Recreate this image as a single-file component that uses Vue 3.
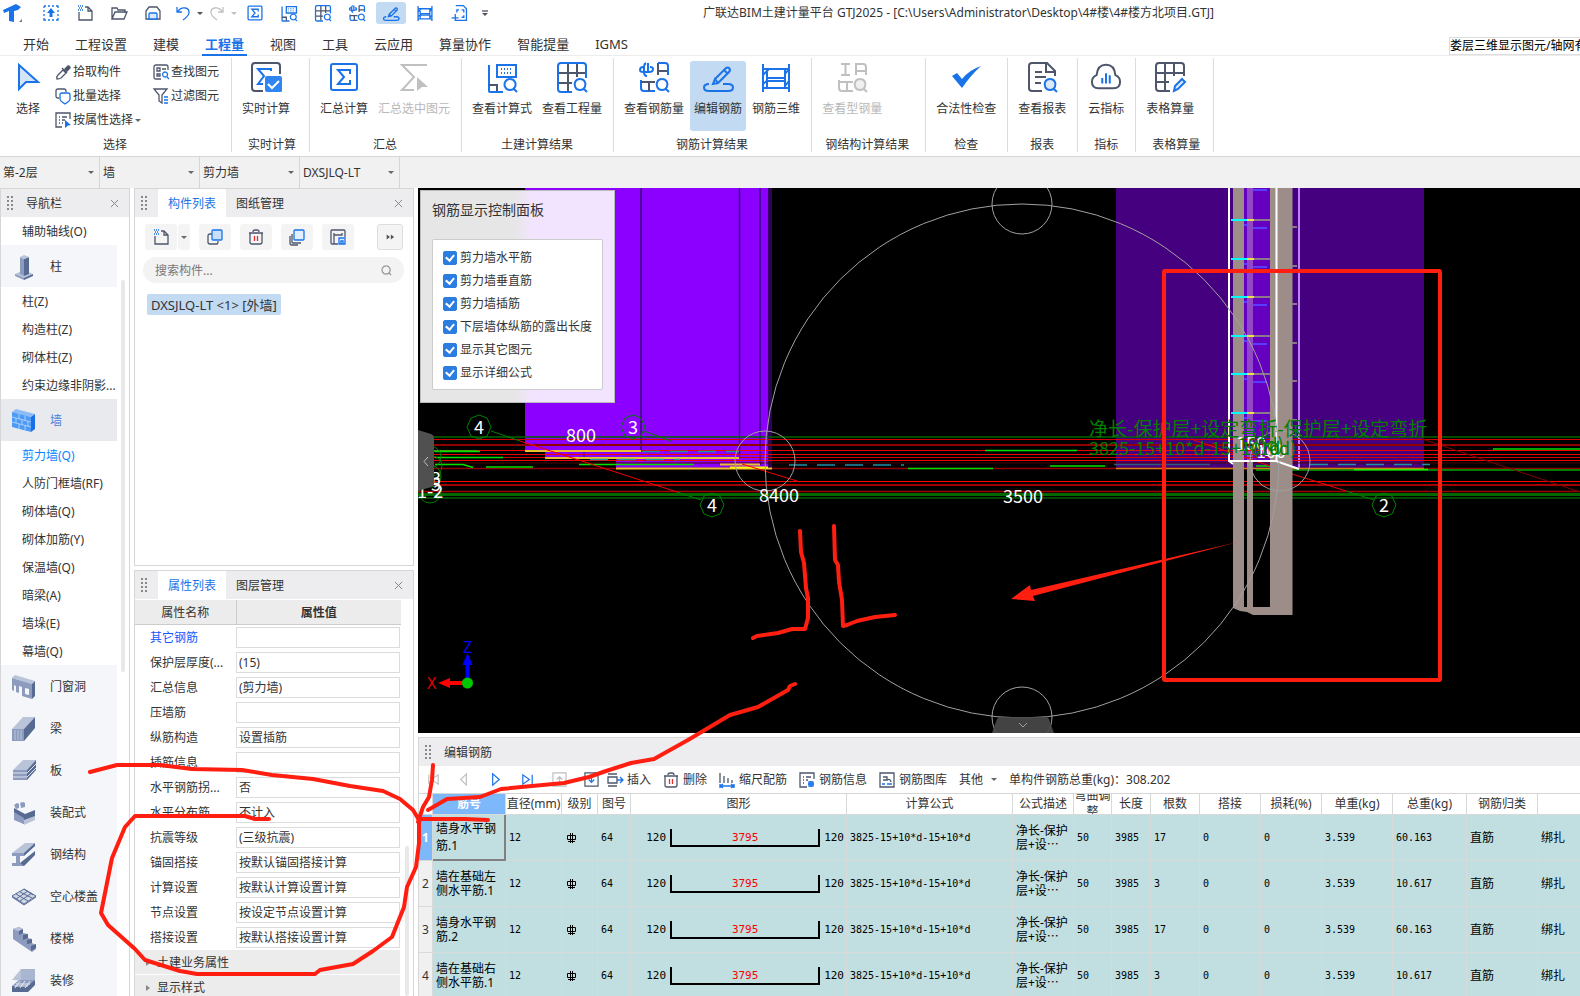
<template>
    <div class="app">
        <header class="titlebar">
            <Icon class="logo" name="logo" :size="24" :w="1" />
            <button v-for="q in quick" :key="q.id" type="button" :class="['qat', q.cls]" :aria-label="q.tip">
                <Icon :name="q.icon" :size="q.size || 16" :w="1.3" />
            </button>
            <h1 class="title">广联达BIM土建计量平台 GTJ2025 - [C:\Users\Administrator\Desktop\4#楼\4#楼方北项目.GTJ]</h1>
        </header>

        <nav class="tabs">
            <button v-for="t in tabs" :key="t" type="button" :class="['tab', { on: t === activeTab }]" @click="activeTab = t">
                <span>{{ t }}</span>
            </button>
            <span class="tip">娄层三维显示图元/轴网有</span>
        </nav>

        <section class="ribbon">
            <div class="group first">
                <div class="actions">
                    <button type="button" class="big"><Icon name="cursor" :size="30" :w="2" /><span>选择</span></button>
                    <div class="smalls">
                        <button v-for="s in smalls" :key="s.text" type="button" class="small">
                            <Icon :name="s.icon" :size="16" :w="1.3" /><span>{{ s.text }}</span><i v-if="s.menu" class="caret"></i>
                        </button>
                    </div>
                </div>
                <div class="gname">选择</div>
            </div>
            <div v-for="g in groups" :key="g.name" :class="['group', g.cls]">
                <div class="actions">
                    <button v-for="b in g.items" :key="b[0]" type="button" :class="['big', b[2]]" :disabled="b[2] === 'off'">
                        <Icon :name="b[1]" :size="30" :w="2" /><span>{{ b[0] }}</span>
                    </button>
                </div>
                <div class="gname">{{ g.name }}</div>
            </div>
        </section>

        <div class="combos">
            <label v-for="c in combos" :key="c" class="combo">
                <select :aria-label="c"><option>{{ c }}</option></select>
                <i class="caret"></i>
            </label>
        </div>

        <main class="work">
            <aside class="panel navpanel">
                <div class="phead"><i class="grip"></i><span class="ptitle">导航栏</span><button type="button" class="close" aria-label="关闭"><Icon name="close" :size="9" :w="1" /></button></div>
                <div class="navlist">
                    <template v-for="n in navs" :key="n.text">
                        <button v-if="n.icon" type="button" :class="['cat', { cur: n.cur }]"><Icon :name="n.icon" :size="26" :w="1" /><span>{{ n.text }}</span></button>
                        <button v-else type="button" :class="['leaf', { blue: n.blue }]">{{ n.text }}</button>
                    </template>
                    <i class="navbar"></i>
                </div>
            </aside>

            <div class="side">
                <section class="panel comp">
                    <div class="phead">
                        <i class="grip"></i>
                        <button type="button" class="ptab on">构件列表</button>
                        <button type="button" class="ptab">图纸管理</button>
                        <button type="button" class="close" aria-label="关闭"><Icon name="close" :size="9" :w="1" /></button>
                    </div>
                    <div class="ctools">
                        <span class="split">
                            <button type="button" class="tool" aria-label="新建"><Icon name="newfile" :size="16" :w="1.3" /></button>
                            <button type="button" class="tool arrow" aria-label="更多"><i class="caret"></i></button>
                        </span>
                        <button type="button" class="tool" aria-label="复制"><Icon name="copy" :size="16" :w="1.3" /></button>
                        <button type="button" class="tool" aria-label="删除"><Icon name="trash" :size="16" :w="1.3" /></button>
                        <button type="button" class="tool" aria-label="层间复制"><Icon name="layers" :size="16" :w="1.3" /></button>
                        <button type="button" class="tool" aria-label="存档"><Icon name="archive" :size="16" :w="1.3" /></button>
                        <button type="button" class="tool more" aria-label="展开"><Icon name="more" :size="10" :w="1" /></button>
                    </div>
                    <label class="search">
                        <input type="text" placeholder="搜索构件..." aria-label="搜索构件">
                        <Icon name="search" :size="11" :w="1.3" />
                    </label>
                    <button type="button" class="node">DXSJLQ-LT &lt;1&gt; [外墙]</button>
                </section>

                <section class="panel props">
                    <div class="phead">
                        <i class="grip"></i>
                        <button type="button" class="ptab on">属性列表</button>
                        <button type="button" class="ptab">图层管理</button>
                        <button type="button" class="close" aria-label="关闭"><Icon name="close" :size="9" :w="1" /></button>
                    </div>
                    <table class="ptable">
                        <thead><tr><th class="pn">属性名称</th><th class="pv">属性值</th></tr></thead>
                        <tbody>
                            <tr v-for="(p, i) in props" :key="p[0]">
                                <td><label :for="'p' + i" :class="{ blue2: i === 0 }">{{ p[0] }}</label></td>
                                <td><input :id="'p' + i" v-model="p[1]" type="text"></td>
                            </tr>
                        </tbody>
                    </table>
                    <button type="button" class="fold"><i class="tri"></i>土建业务属性</button>
                    <button type="button" class="fold"><i class="tri"></i>显示样式</button>
                    <i class="pbar"></i>
                </section>
            </div>

            <div class="right">
                <section class="view">
                    <svg class="scene" viewBox="418 188 1162 545" preserveAspectRatio="xMinYMin slice">
                        <!-- 左侧墙体 -->
                        <path d="M525 188H768V468H616V458H545V451H525Z" fill="#8b00ff" />
                        <path d="M768 188h4V468h-4z" fill="#30005c" />
                        <path d="M641 188V451M739.5 188V458M760 188V465M584 451v6" stroke="#3c0078" stroke-width="1.5" />
                        <!-- 右侧墙体 -->
                        <path d="M1116 188h308V468h-308z" fill="#450080" />
                        <path d="M1244 188h26V461h-26z" fill="#6600c0" />
                        <path d="M1247 188h6V461h-6z" fill="#9048c8" />
                        <path d="M1299 188V468" stroke="#c080ff" stroke-width="2" />
                        <!-- 轴线 -->
                        <path v-for="l in gridLines" :key="l[0]" :d="`M418 ${l[0]}H2400`" :stroke="l[1]" :stroke-width="l[2]" />
                        <path d="M435 451.5h45M435 457.5h68M435 464.5h28l10 3M486 467h47M579 464.5h115M985 450.5h92M908 468.5h85M1050 466h55M1256 466h20M1493 449H2400M418 451h60" stroke="#00e000" stroke-width="1.5" fill="none" />
                        <path d="M1256 470H2400" stroke="#008000" stroke-width="2" />
                        <path d="M1354 469.5h74" stroke="#00ff00" stroke-width="1.5" />
                        <path d="M525 451h116M616 468.5h156M720 464.5h40M545 458h194" stroke="#e8c030" stroke-width="2" />
                        <path d="M730 467.5h38" stroke="#ffff00" stroke-width="2" />
                        <path d="M1116 468.5h308" stroke="#d08010" stroke-width="1.5" />
                        <path d="M642 451.5h97M590 459.5h90M789 465h115M1310 464.5h120" stroke="#2090a8" stroke-width="1.5" stroke-dasharray="18 10" />
                        <path d="M1114 464.5h96" stroke="#305878" stroke-width="1.5" />
                        <path d="M520 441L677 492M742 464l58 18M1191 439l79 27M1292 474l54 17" stroke="#f00000" fill="none" />
                        <path d="M1422 439L1580 492" stroke="#800000" />
                        <path d="M491 431l29 10M677 492l24 8M644 431l27 10M1346 491l28 9" stroke="#008000" fill="none" />
                        <!-- 暗柱 -->
                        <path d="M1233 188h11V607h3V461h6V607h17V188h22.500V615H1253l-6-3-7-1-7-3z" fill="#9d8d88" />
                        <path d="M1229 188V461l4 3M1276.500 188V461M1229 461h47l23 8" stroke="#fff" stroke-width="2" fill="none" />
                        <g v-for="y in ticks" :key="y" stroke-width="2">
                            <path :d="`M1231 ${y}h16`" stroke="#00ffff" />
                            <path :d="`M1247 ${y}h7`" stroke="#f0e040" />
                            <path :d="`M1254 ${y}h16M1292 ${y + 7}h5`" stroke="#8a7a88" />
                            <path :d="`M1253 ${y + 8}h14M1244 ${y + 5}h3`" stroke="#5a3cff" />
                        </g>
                        <path d="M1253 190h14" stroke="#5a3cff" stroke-width="2" />
                        <!-- 动态观察球 -->
                        <g fill="none" stroke="#a0a0a0">
                            <circle cx="1022" cy="461" r="257" />
                            <circle cx="765" cy="461" r="30" />
                            <circle cx="1280" cy="461" r="30" />
                            <circle cx="1022" cy="204" r="30" />
                            <circle cx="1022" cy="717" r="30" />
                        </g>
                        <!-- 轴号 -->
                        <g v-for="b in bubbles" :key="b[0]">
                            <path :d="`M${b[0]} ${b[1] - 12}l8 3 4 9-4 9-8 3-8-3-4-9 4-9z`" fill="none" stroke="#008000" />
                            <text :x="b[0]" :y="b[1] + 7" text-anchor="middle" class="num">{{ b[2] }}</text>
                        </g>
                        <g fill="none" stroke="#008000">
                            <circle cx="430" cy="457" r="11" /><circle cx="432" cy="466" r="10" /><circle cx="430" cy="476" r="11" /><circle cx="430" cy="492" r="11" />
                        </g>
                        <text x="431" y="491" class="num">5</text>
                        <text x="431" y="485" class="num">3</text>
                        <text x="417" y="498" class="num">1-2</text>
                        <text x="566" y="442" class="num">800</text>
                        <text x="759" y="502" class="num">8400</text>
                        <text x="1003" y="503" class="num">3500</text>
                        <text x="1236" y="450" class="num">150</text>
                        <text x="1256" y="458" class="num">100</text>
                        <text x="1262" y="456" class="num">00</text>
                        <text x="1089" y="436" class="formula">净长-保护层+设定弯折-保护层+设定弯折</text>
                        <text x="1089" y="455" class="formula f2">3825-15+10*d-15+10*d</text>
                        <text x="1238" y="451" class="formula f2">10*d)</text>
                        <text x="1253" y="455" class="formula f2">(10d)</text>
                        <!-- 坐标轴 -->
                        <path d="M467.500 683V660" stroke="#0000ff" stroke-width="4" />
                        <path d="M462.500 665l5-12 5 12z" fill="#0000ff" />
                        <path d="M467 683H448" stroke="#ff0000" stroke-width="4" />
                        <path d="M450 678l-12 5 12 5z" fill="#ff0000" />
                        <circle cx="467.500" cy="683" r="5.500" fill="#00c800" />
                        <text x="427" y="689" class="axis red">X</text>
                        <text x="463" y="653" class="axis blu">Z</text>
                        <!-- 折叠把手 -->
                        <path d="M418 430l13 4q3 1 3 4v45q0 3-3 4l-13 4z" fill="#505050" />
                        <path d="M428 457l-4 4.500 4 4.500" stroke="#c0c0c0" fill="none" />
                        <path d="M992 733l5-14q1-2 4-2h44q3 0 4 2l5 14z" fill="#4a4a4a" fill-opacity=".9" />
                        <path d="M1019 723l4 4 4-4" stroke="#a0a0a0" fill="none" />
                    </svg>
                    <div class="floater">
                        <h2>钢筋显示控制面板</h2>
                        <div class="checks">
                            <label v-for="c in checks" :key="c.text"><input v-model="c.on" type="checkbox"><span>{{ c.text }}</span></label>
                        </div>
                    </div>
                </section>

                <section class="panel bottom">
                    <div class="phead"><i class="grip"></i><span class="ptitle">编辑钢筋</span></div>
                    <div class="btools">
                        <button v-for="n in steps" :key="n" type="button" class="step" :aria-label="n"><Icon :name="n" :size="15" :w="1.2" /></button>
                        <button v-for="t in editTools" :key="t[0]" type="button" class="etool"><Icon :name="t[1]" :size="16" :w="1.3" /><span>{{ t[0] }}</span></button>
                        <button type="button" class="etool">其他<i class="caret"></i></button>
                        <span class="sum">单构件钢筋总重(kg)：308.202</span>
                    </div>
                    <div class="twrap">
                        <table class="rebar">
                            <colgroup><col v-for="(c, i) in cols" :key="i" :style="{ width: c[1] + 'px' }"></colgroup>
                            <thead>
                                <tr><th v-for="(c, i) in cols" :key="i" :class="{ sel: i === 1 }"><div class="th">{{ c[0] }}</div></th></tr>
                            </thead>
                            <tbody>
                                <tr v-for="(r, i) in rows" :key="i">
                                    <th scope="row" :class="{ sel: i === 0 }">{{ i + 1 }}</th>
                                    <td :class="['name', { picked: i === 0 }]">{{ r.name }}</td>
                                    <td class="mono">12</td>
                                    <td class="mid"><svg class="grade" width="11" height="12" viewBox="0 0 11 12" fill="none" stroke="#000"><path d="M1.500 3.500h8v4h-8zM4.500 1v10M6.500 1v10M2 9.500h7" /></svg></td>
                                    <td class="mono">64</td>
                                    <td class="shape"><div><span>120</span><b>3795</b><span>120</span></div></td>
                                    <td class="mono">3825-15+10*d-15+10*d</td>
                                    <td class="desc">净长-保护<br>层+设⋯</td>
                                    <td class="mono">50</td>
                                    <td class="mono">3985</td>
                                    <td class="mono">{{ r.count }}</td>
                                    <td class="mono">0</td>
                                    <td class="mono">0</td>
                                    <td class="mono">3.539</td>
                                    <td class="mono">{{ r.total }}</td>
                                    <td>直筋</td>
                                    <td>绑扎</td>
                                </tr>
                            </tbody>
                        </table>
                    </div>
                </section>
            </div>
        </main>

        <!-- 批注层 -->
        <svg class="marks" width="1580" height="996" fill="none" stroke="#ff1e10" stroke-width="4" stroke-linecap="round" stroke-linejoin="round" aria-hidden="true">
            <rect x="1164" y="271" width="276" height="409" rx="1" />
            <path d="M1238 542L1031 590l-1-5-19 14 24 2-2-5z" fill="#ff1e10" stroke="none" />
            <polyline v-for="m in marks" :key="m" :points="m" />
        </svg>
    </div>
</template>
<script setup>
    import {ref,h} from 'vue'

    const B='#1a73e8'
    const D='#4d566b'
    const L='#c0c0c0'
    const N1='#b9c4d9'
    const N2='#8d9cbe'
    const N3='#566a92'
    const lens=(c,f='none')=>[c,'M23 17a5.500 5.500 0 1 0 .1 0M27 27l3 3',f]
    const sigma='M21 12V8H9l6 7-6 7h12v-4'

    // 图标: [视图尺寸, [描边, 路径, 填充]...]
    const icons={
        logo:[24,['none','M3 9L16 3l5 3-3 3-4 1v11l-5-1V10l-5 2z',B],['none','M22 18v3h-3z','#777']],
        upload:[16,[B,'M1 1h2M5 1h2M9 1h2M13 1h2v2M15 5v2M15 9v2M15 13v2h-2M11 15H9M7 15H5M3 15H1v-2M1 11V9M1 7V5M1 3V1'],['none','M8 3l4 5H9.500v4h-3V8H4z',B]],
        newfile:[16,[D,'M2 7v8h13V6l-4-4H8M11 2v4h4'],[B,'M1 1h1M3 1h1M5 1h1M2 3h1M4 3h1M1 5h1M3 5h1M5 5h1']],
        open:[16,[D,'M1 14V3h5l1 2h7v3M1 14L4 7h12l-3 7z']],
        save:[16,[D,'M1 14V6l3-4h8l3 4v8z'],[B,'M4 14V9q0-1 1-1h6q1 0 1 1v5z','#dbe9fb']],
        undo:[16,[B,'M2 2v5h5M2.500 7q3-5 8-4 4 1 3.500 5-.5 3-6 7']],
        redo:[16,[L,'M14 2v5H9M13.500 7q-3-5-8-4-4 1-3.500 5 .5 3 6 7']],
        down:[8,['none','M1 3h6L4 6z','#555']],
        downoff:[8,['none','M1 3h6L4 6z',L]],
        menu:[8,[D,'M1 2h6'],['none','M1 4h6L4 7z','#555']],
        close:[10,['#888','M1 1l8 8M9 1l-8 8']],
        search:[12,['#999','M5.500 1a4.500 4.500 0 1 0 .1 0M9 9l2 2']],
        more:[12,['none','M2 3l4 3-4 3zM7 3l4 3-4 3z','#555']],
        sum:[30,[B,'M4 2h22q2 0 2 2v22q0 2-2 2H4q-2 0-2-2V4q0-2 2-2z'],[B,sigma]],
        live:[30,[D,'M12 29H4q-3 0-3-3V4q0-3 3-3h22q3 0 3 3v8'],[B,'M20 9V7H7l6 7-6 8h5'],['none','M16 14h13q2 0 2 2v13q0 1-2 1H16q-2 0-2-2V16q0-2 2-2z','#2f86f0'],['#fff','M17 22l4 4 7-7']],
        sumsel:[30,[L,'M28 3H3l12 12L3 28h12'],['none','M18 15l11 10h-6l-5 4z',L]],
        calc:[30,[B,'M2 3v26q0 1 1 1h13M10 3h19v12H10z'],[D,'M2 23h8v6'],[B,'M14 7h1M17 7h1M20 7h1M23 7h1M14 11h1M17 11h1M20 11h1M23 11h1'],lens(B)],
        table:[30,[D,'M2 11h27M2 21h13M11 1v28M20 1v14'],[B,'M15 30H4q-3 0-3-3V4q0-3 3-3h22q3 0 3 3v12'],lens(B)],
        rebar:[30,[B,'M7 1q-2 1-2 4v5q0 4 3 4M5 5H4Q1 5 1 8q0 2 3 2h6q4 0 4-3 0-2-3-2M9 1v9'],[D,'M19 13V1M19 9h9'],[B,'M19 1h7q3 0 3 3v9M2 18v8q0 3 3 3h11'],[D,'M2 20h14M10 20v9'],lens(B)],
        steel:[30,[L,'M4 2h9M4 13h9M8.500 2v11M19 13V2h7q3 0 3 3v8M19 9h9M2 18v8q0 3 3 3h11M2 20h14M10 20v9'],lens(L,'#f0f0f0')],
        edit:[30,[B,'M12 17L23 6q2-1 3 0 2 2 0 4L15 21l-5 1 2-5 3 4M21 8l4 4'],[B,'M6 22q-5 0-5 3.500T6 29h19q5 0 5-3.500T25 22h-5']],
        three:[30,[B,'M2 2v28M28 2v28M6 7v18M24 7v18M2 7h26M6 16h18M2 26h26M6 19h18M2 13l6-6M24 12l4-5M24 24l4-5M2 22l5-4']],
        check:[30,['none','M1 14l5-3 5 6Q18 8 30 4 20 13 11 26 6 20 1 14z',B]],
        report:[30,[D,'M15 29H5q-3 0-3-3V4q0-3 3-3h15l8 8v5M19 1v9h8M8 10h7M8 15h11M8 21h6'],lens(B,'#dbe9fb')],
        cloud:[32,[D,'M8 28q-7 0-7-7 0-5 5-7Q7 3 16 3t10 11q5 2 5 7 0 7-7 7z'],[B,'M12 23v-6M16 23V12M20 23v-9']],
        tablepen:[30,[D,'M15 29H4q-3 0-3-3V4q0-3 3-3h22q3 0 3 3v10M1 11h27M1 20h13M10 1v28M19 1v13'],[B,'M19 29l1-5 7-7 3 3-7 7z','#dbe9fb']],
        page:[30,[B,'M9 1h14l6 6v22H8v-9M15 9h-4v5M20 9h4v5M20 23h4v-4M1 24h13M8 17v12']],
        cursor:[30,[B,'M6 3v24l7-7h12z','#d6e4f7']],
        dropper:[16,[D,'M2 15q-1-2 1-4l5-5 3 3-5 5q-2 1-4 1z'],[D,'M10 5l3-3q2 0 2 2l-3 3zM7 4l5 5',D]],
        batch:[16,[D,'M4 10H3q-2 0-2-2V3q0-2 2-2h6q2 0 2 2v1'],[B,'M7 5h6q2 0 2 2v4q0 2-5 5-5-3-5-5V7q0-2 2-2z']],
        attr:[16,[D,'M7 15H1V1h14v6M4 5h1M7 5h5M4 8h1M7 8h3M4 11h1M7 11h1'],['none','M10 8l6 5-3 .5L10 16z',B]],
        find:[16,[D,'M8 15H3q-2 0-2-2V3q0-2 2-2h10q2 0 2 2v3M4 4h3v3H4zM9 5h4M4 10h3v2H4z'],[B,'M12 8a2.500 2.500 0 1 0 .1 0M14 13l2 2']],
        filter:[16,[D,'M1 1h13L9 7v8l-3-2V7z'],[B,'M11 9h4M11 12h4M11 15h4']],
        copy:[16,[D,'M5 5H3Q1 5 1 7v6q0 2 2 2h7q1 0 1-3'],[B,'M6 1h8q1 0 1 1v8q0 1-1 1H6q-1 0-1-1V2q0-1 1-1z','#c9dff8']],
        trash:[16,[D,'M1 4h14M5 3q0-2 2-2h2q2 0 2 2M2 4v9q0 2 2 2h8q2 0 2-2V4'],['#e03030','M6.500 7v5M9.500 7v5']],
        layers:[16,[D,'M3 5v8q0 1 1 1h8M1 7v7q0 2 2 2h6'],[B,'M6 1h8q1 0 1 1v8q0 1-1 1H6q-1 0-1-1V2q0-1 1-1z','#e3f0ff']],
        archive:[16,[D,'M8 15H2q-1 0-1-1V2q0-1 1-1h12q1 0 1 1v6M4 4v11M4 6h8V4M8 6h4'],[B,'M9 9h6v6H9zM11 12h2v3h-2z','#dbe9fb']],
        first:[16,[L,'M13 3v10L6 8zM3 3v10']],
        prev:[16,[L,'M11 2v12L5 8z']],
        next:[16,[B,'M5 2v12l7-6z']],
        last:[16,[B,'M3 3v10l7-5zM13 3v10']],
        up:[16,[L,'M1 1h14v14H1zM8 12V5M5 8l3-3 3 3']],
        dn:[16,[D,'M1 1h14v14H1z'],[B,'M8 4v7M5 8l3 3 3-3']],
        insert:[16,[D,'M1 2h9M1 5h9v6H1zM1 14h9'],[B,'M10 8h6M13 5l3 3-3 3']],
        scale:[16,[D,'M1 1v10M5 4v7M9 6v5M13 8v3'],[B,'M1 14h14M1 12v4M15 12v4M4 12l-3 2 3 2M12 12l3 2-3 2']],
        info:[16,[D,'M8 15H1V1h14v6M4 5h1M7 5h5M4 8h1M7 8h2M4 11h1'],[B,'M12 9v6M9 12h6M10 10h4v4h-4z']],
        lib:[16,[D,'M1 1h14v14H1zM4 5h4v3H4M8 8q3-2 4 2'],[B,'M3 12h3M8 12h5']],
        n柱:[26,['none','M4 20l9-4 9 4-9 5z',N1],['none','M4 20l9 4v2l-9-4zM9 3l4 2v17l-4-2z',N2],['none','M22 20l-9 4v2l9-4zM13 5l5-2v17l-5 2z',N3],['none','M9 3l4-2 5 2-5 2z',N1]],
        n墙:[26,['none','M1 4l4-3 19 5-4 3z','#8bbcf8'],['none','M1 4l19 5v15L1 19z','#4d9bf5'],['none','M20 9l4-3v15l-4 3z','#1a6fe8'],['#a9cffb','M1 9l19 5M1 14l19 5M8 6v5M14 8v4M5 10v5M11 12v5M17 13v5M8 16v5M14 17v5']],
        n门窗洞:[26,['none','M1 4l3-3 20 6-3 3z',N1],['none','M1 4l20 6v15l-10-3v-9l-3-1v7l-3-1v-6l-2-1v6l-2-1zM14 14v6l4 1v-6z',N2],['none','M21 10l3-3v15l-3 3z',N3]],
        n梁:[26,['none','M1 13L12 1h12L13 13z',N1],['none','M1 13h12v12H1z',N2],['none','M13 13L24 1v11L13 25z',N3],[N1,'M4 14v10M7 14v10M10 14v10']],
        n板:[26,['none','M2 12L12 2h13L16 12z',N1],['none','M2 12h14v10H2z',N2],['none','M16 12l9-10v10l-9 10z',N3],['#dfe5f0','M2 15h14l9-9M2 19h14l9-9']],
        n装配式:[26,['none','M3 8l11 6 10-4v9l-11 5-10-5z',N3],['none','M3 12l10 6v6L3 20z',N2],['none','M13 20l11-4v4l-11 5z',N1],['none','M3 5l3-2 2 1v4L5 9zM9 3l3-1 2 1v4l-4 1z',N2]],
        n钢结构:[26,['none','M1 11L14 1h10L14 11z',N1],['none','M1 11h12v3H9v7h4v3H1v-3h4v-7H1z',N2],['none','M13 14L24 4v-3L13 11zM9 21l15-12v4L13 24z',N3]],
        n空心楼盖:[26,[N3,'M1 12l12-7 12 7-12 8zM5 10l12 7M9 8l12 6M13 5l9 6M21 9L9 17M17 7L5 15','#cfd7e6'],[N3,'M1 13l12 8 12-8']],
        n楼梯:[26,['none','M2 3l6-2 4 2v4l5 1v4l4 1v4l4 2v4l-4 3L2 13z',N2],['none','M8 5l4-2v4l-4 2zM12 9l5-1v4l-5 2zM16 14l5-1v4l-5 1zM20 20l5-2v4l-5 3z',N3],['none','M2 3l6-2 4 2-5 2z',N1]],
        n装修:[26,['none','M1 12L10 1h14v12z',N1],['none','M10 1h14v12H10z','#a9b6d0'],['none','M1 18l7-6h16l-7 10H1z',N2],['none','M1 18h16l7-6v5l-7 7H1z',N3],['#e4e9f3','M5 16h14M3 18h14M9 13l-5 7M14 13l-5 7M19 13l-5 7']]
    }

    const Icon=(p)=>{
        const [box,...paths]=icons[p.name]
        return h('svg',{class:'ico',width:p.size,height:p.size,viewBox:`0 0 ${box} ${box}`,'aria-hidden':'true'},
            paths.map(([s,d,f])=>h('path',{d,stroke:s,fill:f||'none','stroke-width':p.w,'vector-effect':'non-scaling-stroke','fill-rule':'evenodd'})))
    }
    Icon.props=['name','size','w']

    // 快速访问栏
    const quick=[
        {id:1,icon:'upload',tip:'上传'},
        {id:2,icon:'newfile',tip:'新建'},
        {id:3,icon:'open',tip:'打开'},
        {id:4,icon:'save',tip:'保存'},
        {id:5,icon:'undo',tip:'撤销',cls:'mid26'},
        {id:6,icon:'down',tip:'撤销列表',cls:'thin',size:8},
        {id:7,icon:'redo',tip:'恢复',cls:'mid26'},
        {id:8,icon:'downoff',tip:'恢复列表',cls:'thin',size:8},
        {id:9,icon:'sum',tip:'汇总计算'},
        {id:10,icon:'calc',tip:'查看计算式'},
        {id:11,icon:'table',tip:'查看工程量'},
        {id:12,icon:'rebar',tip:'查看钢筋量'},
        {id:13,icon:'edit',tip:'编辑钢筋',cls:'hot'},
        {id:14,icon:'three',tip:'钢筋三维'},
        {id:15,icon:'page',tip:'新页'},
        {id:16,icon:'menu',tip:'自定义',cls:'last',size:8}
    ]

    const tabs=['开始','工程设置','建模','工程量','视图','工具','云应用','算量协作','智能提量','IGMS']
    const activeTab=ref('工程量')

    const smalls=[
        {text:'拾取构件',icon:'dropper'},
        {text:'批量选择',icon:'batch'},
        {text:'按属性选择',icon:'attr',menu:true},
        {text:'查找图元',icon:'find'},
        {text:'过滤图元',icon:'filter'}
    ]
    const groups=[
        {name:'实时计算',cls:'loose',items:[['实时计算','live']]},
        {name:'汇总',items:[['汇总计算','sum'],['汇总选中图元','sumsel','off']]},
        {name:'土建计算结果',items:[['查看计算式','calc'],['查看工程量','table']]},
        {name:'钢筋计算结果',items:[['查看钢筋量','rebar'],['编辑钢筋','edit','hot'],['钢筋三维','three']]},
        {name:'钢结构计算结果',cls:'wide',items:[['查看型钢量','steel','off']]},
        {name:'检查',items:[['合法性检查','check']]},
        {name:'报表',items:[['查看报表','report']]},
        {name:'指标',items:[['云指标','cloud']]},
        {name:'表格算量',cls:'loose',items:[['表格算量','tablepen']]}
    ]
    const combos=['第-2层','墙','剪力墙','DXSJLQ-LT']

    // 导航树
    const cat=(text,cur)=>({text,icon:'n'+text,cur})
    const leaf=(text,blue)=>({text,blue})
    const navs=[
        leaf('辅助轴线(O)'),cat('柱'),
        leaf('柱(Z)'),leaf('构造柱(Z)'),leaf('砌体柱(Z)'),leaf('约束边缘非阴影...'),
        cat('墙',true),
        leaf('剪力墙(Q)',true),leaf('人防门框墙(RF)'),leaf('砌体墙(Q)'),leaf('砌体加筋(Y)'),
        leaf('保温墙(Q)'),leaf('暗梁(A)'),leaf('墙垛(E)'),leaf('幕墙(Q)'),
        cat('门窗洞'),cat('梁'),cat('板'),cat('装配式'),cat('钢结构'),cat('空心楼盖'),cat('楼梯'),cat('装修')
    ]

    const props=ref([
        ['其它钢筋',''],['保护层厚度(...','(15)'],['汇总信息','(剪力墙)'],['压墙筋',''],['纵筋构造','设置插筋'],
        ['插筋信息',''],['水平钢筋拐...','否'],['水平分布筋','不计入'],['抗震等级','(三级抗震)'],
        ['锚固搭接','按默认锚固搭接计算'],['计算设置','按默认计算设置计算'],['节点设置','按设定节点设置计算'],['搭接设置','按默认搭接设置计算']
    ])

    const checks=ref(['剪力墙水平筋','剪力墙垂直筋','剪力墙插筋','下层墙体纵筋的露出长度','显示其它图元','显示详细公式'].map(text=>({text,on:true})))

    // 三维视图
    const gridLines=[
        [437,'#006400',1.5],[439.5,'#d00000',1],[445,'#900000',2],[450.5,'#f00000',1],[454.5,'#f00000',1],[457.5,'#d00000',1],
        [460.5,'#f00000',1],[463,'#500000',1],[468.5,'#900000',1.5],[481.5,'#ff0000',1],[485,'#a00000',2],[491.5,'#a00000',1.5],
        [494.5,'#006800',3],[498,'#006000',1.5]
    ]
    const ticks=[220,259,297,336,374,413]
    const bubbles=[[479,427,'4'],[633,427,'3'],[712,505,'4'],[1384,505,'2']]

    const steps=['first','prev','next','last','up','dn']
    const editTools=[['插入','insert'],['删除','trash'],['缩尺配筋','scale'],['钢筋信息','info'],['钢筋图库','lib']]

    // 钢筋表: [标题, 宽]
    const cols=[
        ['',14],['筋号',73],['直径(mm)',56],['级别',36],['图号',33],['图形',216],['计算公式',166],['公式描述',61],['弯曲调整',38],
        ['长度',39],['根数',49],['搭接',61],['损耗(%)',61],['单重(kg)',71],['总重(kg)',74],['钢筋归类',71],['',81]
    ]
    const rows=[
        {name:'墙身水平钢筋.1',count:17,total:'60.163'},
        {name:'墙在基础左侧水平筋.1',count:3,total:'10.617'},
        {name:'墙身水平钢筋.2',count:17,total:'60.163'},
        {name:'墙在基础右侧水平筋.1',count:3,total:'10.617'}
    ]

    // 手绘批注
    const marks=[
        '800,531 801,552 804,563 806,588 808,598 808,618 805,629 792,629 778,633 757,636 753,638',
        '834,526 835,560 838,565 839,582 842,600 843,626 847,625 857,621 875,617 895,615',
        '795,684 790,686 788,690 758,707 730,715 688,740 654,759 631,763 606,771 589,777 564,783 501,789 480,797 447,799 428,810',
        '433,765 432,780 429,797 423,807 418,822 421,819 465,819 488,820',
        '90,772 117,765 160,765 192,769 242,770 272,775 313,779 350,786 383,791 400,799 413,810 419,820 419,843 416,867 407,887 404,907 392,937 373,951 353,964 320,970 315,974 197,974 180,971 145,960 135,949 108,925 101,913 107,883 112,858 125,827 135,816 245,816 255,819 269,819'
    ]
</script>
<style>
    body {
        margin: 0;
        background: #fff;
    }
</style>
<style scoped>
    .app {
        position: relative;
        display: flex;
        flex-direction: column;
        height: 100vh;
        overflow: hidden;
        background: #fff;
        color: #333;
        font: 12px/16px "Noto Sans", "Noto Sans CJK SC", sans-serif;
    }
    button, input, select {
        font: inherit;
        color: inherit;
        border: 0;
        padding: 0;
        margin: 0;
        background: none;
    }
    button {
        white-space: nowrap;
        text-align: left;
    }
    .ico {
        flex: none;
        display: block;
        overflow: visible;
    }
    .caret {
        flex: none;
        border: 3px solid transparent;
        border-top: 3px solid #666;
        border-bottom: 0;
    }

    /* 标题栏 */
    .titlebar {
        flex: none;
        display: flex;
        align-items: center;
        height: 26px;
    }
    .logo {
        margin-right: 10px;
    }
    .qat {
        flex: none;
        display: flex;
        align-items: center;
        justify-content: center;
        width: 34px;
        height: 22px;
    }
    .qat.mid26 {
        width: 26px;
    }
    .qat.thin {
        width: 8px;
    }
    .qat.last {
        width: 18px;
    }
    .qat.hot {
        width: 30px;
        margin: 0 2px;
        border-radius: 3px;
        background: #c2daf2;
    }
    .title {
        flex: 1;
        margin: 0;
        padding-right: 157px;
        font-size: 12px;
        font-weight: 400;
        text-align: center;
        white-space: nowrap;
    }

    .tabs {
        flex: none;
        display: flex;
        height: 29px;
        padding-left: 10px;
        border-bottom: 1px solid #ececec;
        font-size: 13px;
    }
    .tab {
        flex: none;
        height: 30px;
        padding: 7px 3px 0;
        margin: 0 10px;
        border-bottom: 2px solid transparent;
    }
    .tab.on {
        color: #1a73e8;
        font-weight: 700;
        border-bottom-color: #1a73e8;
    }
    .tip {
        margin: 11px 0 0 auto;
        height: 16px;
        width: 130px;
        overflow: hidden;
        white-space: nowrap;
        border: 1px solid #ddd;
        border-right: 0;
        font-size: 12px;
        color: #000;
    }

    /* 功能区 */
    .ribbon {
        flex: none;
        display: flex;
        height: 100px;
        border-bottom: 1px solid #d6d6d6;
    }
    .group {
        flex: none;
        margin-top: 2px;
        height: 94px;
        padding: 0 7px 0 6px;
        border-right: 1px solid #dcdcdc;
    }
    .group.loose {
        padding-right: 15px;
    }
    .group.wide {
        padding-right: 39px;
    }
    .group.wide .gname {
        margin-right: -30px;
    }
    .group.loose .gname {
        margin-right: -12px;
    }
    .group.first {
        padding: 0 10px 0 9px;
    }
    .actions {
        display: flex;
        gap: 2px;
        height: 74px;
        padding-top: 3px;
    }
    .gname {
        height: 17px;
        line-height: 20px;
        text-align: center;
        white-space: nowrap;
    }
    .big {
        display: flex;
        flex-direction: column;
        align-items: center;
        gap: 9px;
        height: 70px;
        padding: 1px 4px 0;
        border-radius: 3px;
    }
    .big.hot {
        background: #c2daf2;
    }
    .big.off {
        color: #b8b8b8;
    }
    .smalls {
        display: grid;
        grid-template-rows: repeat(3, 24px);
        grid-template-columns: 98px 68px;
        grid-auto-flow: column;
        margin: -1px 0 0 6px;
    }
    .small {
        display: flex;
        align-items: center;
        gap: 2px;
    }

    .combos {
        flex: none;
        display: flex;
        height: 31px;
        background: #f1f1f1;
    }
    .combo {
        display: flex;
        align-items: center;
        width: 100px;
        padding: 0 5px 0 3px;
        box-sizing: border-box;
        border-right: 1px solid #d6d6d6;
    }
    .combo select {
        flex: 1;
        min-width: 0;
        appearance: none;
    }

    /* 工作区 */
    .work {
        flex: 1;
        min-height: 0;
        display: flex;
        gap: 4px;
    }
    .panel {
        position: relative;
        box-sizing: border-box;
        border: 1px solid #d6d6d6;
        background: #fff;
        overflow: hidden;
    }
    .phead {
        display: flex;
        align-items: center;
        height: 28px;
        padding-left: 5px;
        background: #ededf0;
    }
    .grip {
        width: 8px;
        height: 16px;
        margin-right: 10px;
        background-image: radial-gradient(circle, #888 1px, transparent 1px);
        background-size: 4px 4px;
    }
    .ptitle {
        margin-left: 2px;
        padding-top: 2px;
    }
    .ptab {
        height: 28px;
        padding: 2px 10px 0;
    }
    .ptab.on {
        background: #fff;
        color: #1a73e8;
    }
    .close {
        margin-left: auto;
        padding: 4px 10px;
    }
    .navpanel {
        flex: none;
        width: 130px;
        display: flex;
        flex-direction: column;
        border-bottom: 0;
    }
    .navlist {
        flex: 1;
        min-height: 0;
        overflow: hidden;
        position: relative;
        display: flex;
        flex-direction: column;
        align-items: stretch;
    }
    .leaf {
        flex: none;
        height: 28px;
        padding: 2px 0 0 21px;
    }
    .blue {
        color: #0a84ff;
    }
    .cat {
        flex: none;
        display: flex;
        align-items: center;
        gap: 13px;
        height: 42px;
        padding: 2px 0 0 10px;
        margin-right: 12px;
        background: #f5f6f9;
    }
    .cat.cur {
        background: #e9eaee;
        color: #4a80d8;
    }
    .navbar {
        position: absolute;
        right: 4px;
        top: 63px;
        width: 4px;
        height: 392px;
        border-radius: 2px;
        background: #e8e8e8;
    }

    .side {
        flex: none;
        width: 280px;
        display: flex;
        flex-direction: column;
        gap: 4px;
    }
    .comp {
        flex: 1;
    }
    .ctools {
        display: flex;
        gap: 9px;
        padding: 7px 10px;
    }
    .split {
        display: flex;
        gap: 1px;
    }
    .tool {
        display: flex;
        align-items: center;
        justify-content: center;
        width: 32px;
        height: 26px;
        border-radius: 3px;
        background: #f4f4f5;
    }
    .tool.arrow {
        width: 12px;
    }
    .tool.more {
        width: 26px;
        margin-left: auto;
        border: 1px solid #ddd;
    }
    .search {
        display: flex;
        align-items: center;
        height: 26px;
        margin: 0 9px 0 8px;
        padding: 0 12px;
        border-radius: 13px;
        background: #f3f3f4;
    }
    .search input {
        flex: 1;
        min-width: 0;
        padding-top: 2px;
        outline: 0;
    }
    .search input::placeholder {
        color: #777;
    }
    .node {
        display: block;
        margin: 11px 0 0 12px;
        height: 21px;
        padding: 0 4px;
        border-radius: 2px;
        background: #c2daf2;
        font-size: 13px;
    }

    .props {
        flex: 0 0 426px;
        border-bottom: 0;
    }
    .ptable {
        width: 266px;
        margin-top: 1px;
        border-collapse: collapse;
        table-layout: fixed;
    }
    .ptable th {
        height: 24px;
        padding: 2px 0 0;
        box-sizing: border-box;
        background: #ececec;
        border-bottom: 1px solid #ccc;
    }
    .ptable .pn {
        width: 101px;
        font-weight: 400;
        border-right: 1px solid #ccc;
    }
    .ptable td {
        height: 25px;
        padding: 0;
    }
    .ptable td label {
        display: block;
        padding: 2px 0 0 15px;
    }
    .ptable td input {
        display: block;
        width: 164px;
        height: 21px;
        padding: 0 2px;
        box-sizing: border-box;
        border: 1px solid #dcdcdc;
    }
    .ptable td .blue2 {
        color: #1557ff;
    }
    .fold {
        display: flex;
        align-items: center;
        gap: 7px;
        width: 265px;
        height: 24px;
        margin-bottom: 1px;
        padding: 2px 0 0 11px;
        background: #ececec;
    }
    .tri {
        border: 3px solid transparent;
        border-left: 4px solid #888;
        border-right: 0;
    }
    .pbar {
        position: absolute;
        right: 4px;
        top: 275px;
        bottom: 0;
        width: 4px;
        border-radius: 2px;
        background: #e8e8e8;
    }

    .right {
        flex: 1;
        min-width: 0;
        display: flex;
        flex-direction: column;
        gap: 4px;
    }
    .view {
        flex: 1;
        min-height: 0;
        position: relative;
        background: #000;
        overflow: hidden;
    }
    .scene {
        position: absolute;
        inset: 0;
        width: 100%;
        height: 100%;
    }
    .num {
        fill: #fff;
        font: 18px "Noto Sans CJK SC", sans-serif;
    }
    .formula {
        fill: #008000;
        font: 19px "Noto Sans CJK SC", sans-serif;
    }
    .f2 {
        font-size: 18px;
    }
    .axis {
        font: 16px "Noto Sans", sans-serif;
    }
    .red {
        fill: #e00000;
    }
    .blu {
        fill: #0000ff;
    }
    .floater {
        position: absolute;
        left: 2px;
        top: 2px;
        width: 195px;
        height: 213px;
        padding: 11px;
        box-sizing: border-box;
        border: 1px solid #bbb;
        background: linear-gradient(90deg, #e6e6e6 48%, #f2e4ff 58%);
    }
    .floater h2 {
        margin: 0 0 21px;
        font-size: 14px;
        font-weight: 400;
    }
    .checks {
        display: flex;
        flex-direction: column;
        gap: 7px;
        width: 171px;
        height: 151px;
        padding: 10px;
        box-sizing: border-box;
        border: 1px solid #ccc;
        border-radius: 2px;
        background: #fff;
    }
    .checks label {
        display: flex;
        align-items: center;
        gap: 3px;
        white-space: nowrap;
    }
    .checks input {
        position: relative;
        width: 14px;
        height: 14px;
        appearance: none;
        border: 1px solid #999;
        border-radius: 2px;
    }
    .checks input:checked {
        border-color: #2b7de0;
        background: #2b7de0;
    }
    .checks input:checked::after {
        content: "";
        position: absolute;
        left: 3px;
        top: 1px;
        width: 4px;
        height: 6px;
        border: solid #fff;
        border-width: 0 2px 2px 0;
        transform: rotate(40deg);
    }

    /* 编辑钢筋 */
    .bottom {
        flex: 0 0 259px;
        border-right: 0;
        border-bottom: 0;
    }
    .btools {
        display: flex;
        align-items: center;
        height: 27px;
        border-bottom: 1px solid #d6d6d6;
    }
    .step {
        display: flex;
        justify-content: center;
        width: 32px;
    }
    .step:first-child {
        width: 28px;
    }
    .etool {
        display: flex;
        align-items: center;
        gap: 4px;
        margin-right: 12px;
    }
    .etool .caret {
        margin-left: 4px;
    }
    .twrap {
        overflow: hidden;
    }
    .rebar {
        width: 1200px;
        border-collapse: separate;
        border-spacing: 0;
        table-layout: fixed;
    }
    .rebar th, .rebar td {
        box-sizing: border-box;
        border-right: 1px solid #d8dada;
        border-bottom: 1px solid #d8dada;
        font-weight: 400;
    }
    .rebar th {
        padding: 0;
        background: #fff;
    }
    .th {
        display: flex;
        align-items: center;
        justify-content: center;
        height: 20px;
        overflow: hidden;
        text-align: center;
    }
    .rebar tbody th {
        background: #f0f0f0;
    }
    .rebar .sel, .rebar tbody .sel {
        background: #7db8fa;
        color: #fff;
        font-weight: 700;
    }
    .rebar td {
        height: 46px;
        padding: 0 3px;
        background: #c1dee0;
        color: #000;
        line-height: 14px;
    }
    .rebar .name {
        padding-right: 8px;
        word-break: break-all;
    }
    .rebar .picked {
        border: 2px solid #808080;
        border-width: 0 2px 2px 0;
        line-height: 17px;
    }
    .rebar .mono {
        font-family: "DejaVu Sans Mono", monospace;
        font-size: 10px;
        white-space: nowrap;
    }
    .rebar .mid {
        padding-left: 4px;
    }
    .grade {
        display: block;
    }
    .rebar .shape {
        padding: 0;
    }
    .shape div {
        display: flex;
        align-items: center;
        justify-content: flex-end;
        gap: 4px;
        padding-right: 2px;
        font: 11px/17px "DejaVu Sans Mono", monospace;
    }
    .shape b {
        width: 146px;
        height: 16px;
        border: 2px solid #000;
        border-top: 0;
        text-align: center;
        font-weight: 400;
        color: #f00;
    }

    .marks {
        position: absolute;
        left: 0;
        top: 0;
        pointer-events: none;
    }
</style>
